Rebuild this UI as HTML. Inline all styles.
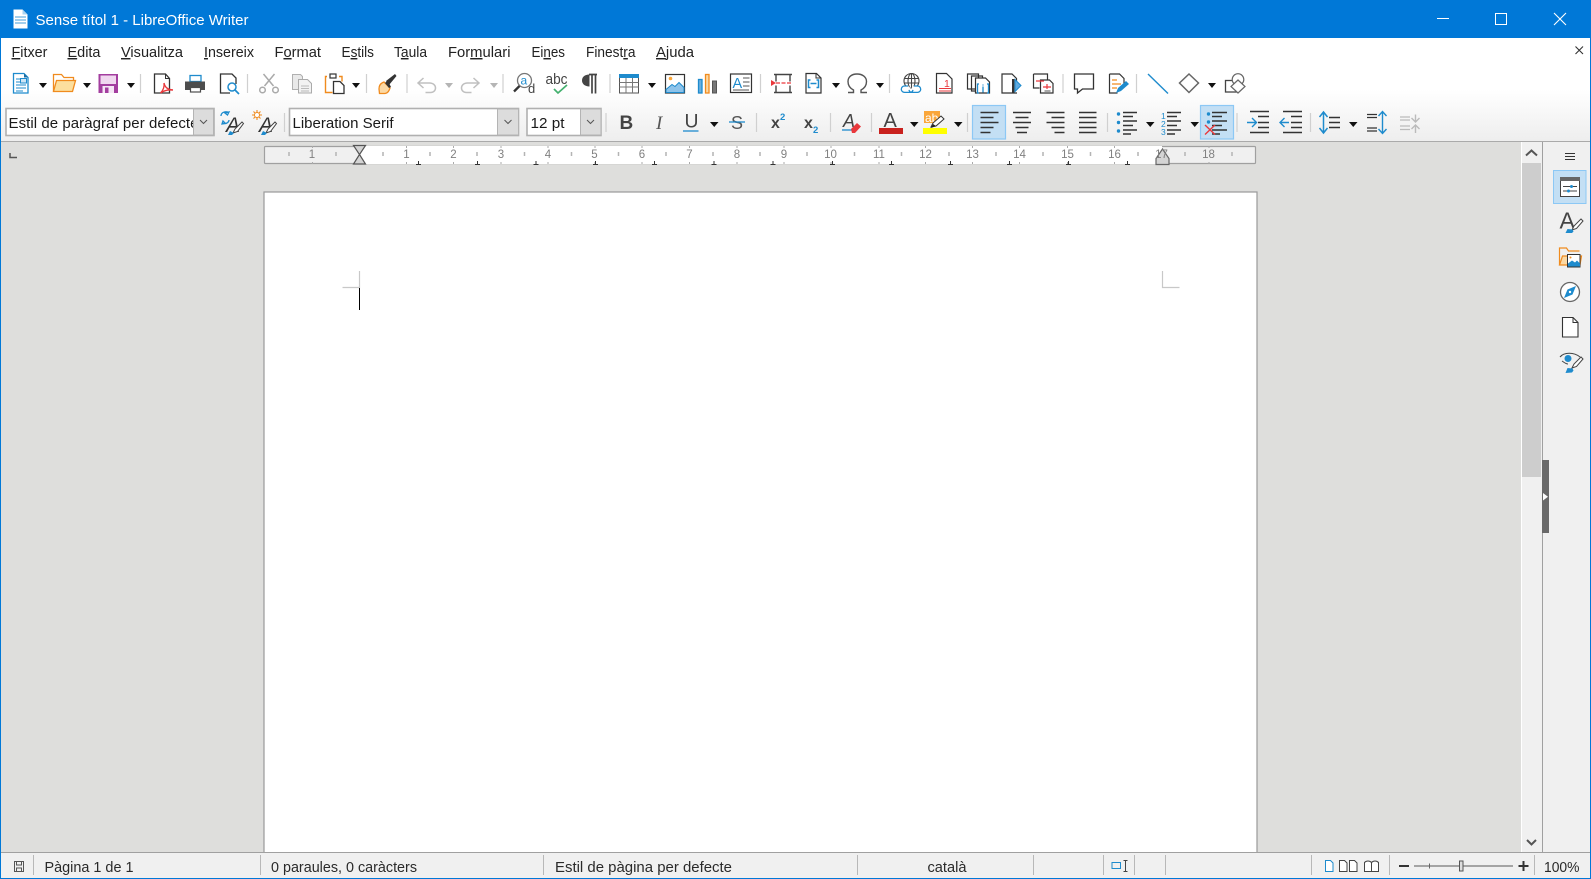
<!DOCTYPE html>
<html><head><meta charset="utf-8"><title>Sense títol 1 - LibreOffice Writer</title>
<style>
html,body{margin:0;padding:0;background:#fff;width:1591px;height:879px;overflow:hidden}
svg{display:block;position:absolute;left:0;top:0}
text{font-family:"Liberation Sans",sans-serif;fill:#222}
.m{font-size:14.5px;fill:#222}
.s{font-size:14.5px;fill:#2a2a2a}
.c{font-size:15px;fill:#1a1a1a}
.r{font-size:11.5px;fill:#808080;text-anchor:middle}
.u{text-decoration:underline}
.a{fill:#111}
.sep{stroke:#d0d0d0;stroke-width:1.2}
.sb{stroke:#b8b8b8;stroke-width:1}
.l{stroke:#333;stroke-width:1.6}
</style></head><body>
<svg width="1591" height="879" viewBox="0 0 1591 879" xmlns="http://www.w3.org/2000/svg">
<defs>
<linearGradient id="tb" x1="0" y1="0" x2="0" y2="1"><stop offset="0" stop-color="#fff"/><stop offset=".5" stop-color="#fff"/><stop offset="1" stop-color="#eeeeee"/></linearGradient>
<clipPath id="cl"><rect x="6" y="108" width="187" height="28"/></clipPath>
</defs>
<rect width="1591" height="879" fill="#0078d7"/>
<rect x="1" y="38" width="1589" height="103" fill="url(#tb)"/>
<rect x="1" y="141" width="1589" height="1.500" fill="#aaa"/>
<rect x="1" y="142" width="1520" height="710" fill="#dededc"/>
<!-- title -->
<path d="M13.500 9.500h9l5 5v14h-14z" fill="#fff"/><path d="M22.500 9.500l5 5h-5z" fill="#a9d3f0"/><path d="M15 17h11M15 20h11M15 23h11" stroke="#6ab0e0" stroke-width="1.200"/>
<text x="35.500" y="25" textLength="213" lengthAdjust="spacingAndGlyphs" style="font-size:15px;fill:#fff">Sense títol 1 - LibreOffice Writer</text>
<path d="M1437 18.500h12" stroke="#fff" stroke-width="1"/>
<rect x="1495.500" y="13.500" width="11" height="11" fill="none" stroke="#fff"/>
<path d="M1554 13l12 12M1566 13l-12 12" stroke="#fff" stroke-width="1.100"/>
<!-- menu -->
<text class="m" x="11.500" y="57" textLength="36" lengthAdjust="spacingAndGlyphs"><tspan class="u">F</tspan>itxer</text>
<text class="m" x="67.500" y="57" textLength="33" lengthAdjust="spacingAndGlyphs"><tspan class="u">E</tspan>dita</text>
<text class="m" x="121" y="57" textLength="62" lengthAdjust="spacingAndGlyphs"><tspan class="u">V</tspan>isualitza</text>
<text class="m" x="204" y="57" textLength="50" lengthAdjust="spacingAndGlyphs"><tspan class="u">I</tspan>nsereix</text>
<text class="m" x="274.500" y="57" textLength="46.500" lengthAdjust="spacingAndGlyphs">F<tspan class="u">o</tspan>rmat</text>
<text class="m" x="341.500" y="57" textLength="32.500" lengthAdjust="spacingAndGlyphs">E<tspan class="u">s</tspan>tils</text>
<text class="m" x="394" y="57" textLength="33" lengthAdjust="spacingAndGlyphs">T<tspan class="u">a</tspan>ula</text>
<text class="m" x="448" y="57" textLength="62.500" lengthAdjust="spacingAndGlyphs">For<tspan class="u">m</tspan>ulari</text>
<text class="m" x="531.500" y="57" textLength="33.500" lengthAdjust="spacingAndGlyphs">Ei<tspan class="u">n</tspan>es</text>
<text class="m" x="586" y="57" textLength="49.500" lengthAdjust="spacingAndGlyphs">Finest<tspan class="u">r</tspan>a</text>
<text class="m" x="656" y="57" textLength="38" lengthAdjust="spacingAndGlyphs"><tspan class="u">A</tspan>juda</text>
<path d="M1575.500 46.500l7.500 7.500M1583 46.500l-7.500 7.500" stroke="#333" stroke-width="1.100"/>

<!-- toolbar 1 separators -->
<path class="sep" d="M140.500 74v19M247.500 74v19M366.500 74v19M407 74v19M503 74v19M610 74v19M760.500 74v19M889.500 74v19M1063 74v19M1136.500 74v19"/>
<!-- toolbar 2 separators -->
<path class="sep" d="M284.500 113v19M606 113v19M756.500 113v19M830.500 113v19M871.500 113v19M967.500 113v19M1107.500 113v19M1237 113v19M1310.500 113v19"/>
<!-- dropdown arrows -->
<g class="a">
<path d="M39 83h8l-4 5z M83 83h8l-4 5z M127 83h8l-4 5z M352 83h8l-4 5z M648 83h8l-4 5z M832 83h8l-4 5z M876 83h8l-4 5z M1208 83h8l-4 5z"/>
<path d="M710 122h8.500l-4.250 5z M910 122h8.500l-4.250 5z M954 122h8.500l-4.250 5z M1146 122h8.500l-4.250 5z M1190.500 122h8.500l-4.250 5z M1349 122h8.500l-4.250 5z"/>
</g>
<path d="M445 83h8l-4 5z M490 83h8l-4 5z" fill="#b5b5b5"/>

<!-- New -->
<path d="M13.500 73.500h10.500l4 4v15.500h-14.500z" fill="#fff" stroke="#1e8bcd" stroke-width="1.300"/>
<path d="M24 73.500l4 4h-4z" fill="#1c6ea4"/>
<path d="M16 79h4M16 82h4M16 85h10M16 88h10M16 91h7" stroke="#1e8bcd" stroke-width="1"/>
<rect x="20.500" y="78.500" width="6" height="4.500" fill="#cfe6f5" stroke="#1e8bcd" stroke-width="1"/>
<!-- Open -->
<path d="M53.500 91.500v-17h8l2.500 3h9.500v4" fill="none" stroke="#f08b1e" stroke-width="1.300"/>
<path d="M53.500 91.500l3-11h19l-3 11z" fill="#fcdf9e" stroke="#f08b1e" stroke-width="1.300"/>
<!-- Save -->
<rect x="98.500" y="74" width="19.500" height="19" fill="#a33e9f"/>
<rect x="100.500" y="75.500" width="15.500" height="8.500" fill="#f0d7ef"/>
<rect x="102.500" y="86" width="11.500" height="7" fill="#f5e6f5"/>
<rect x="105" y="87.500" width="3.500" height="5.500" fill="#a33e9f"/>
<!-- PDF -->
<path d="M154.500 74h11l4 4.500v14.500h-15z" fill="#fff" stroke="#333" stroke-width="1.300"/><path d="M165.500 74v4.500h4" fill="none" stroke="#333"/>
<path d="M160.500 93c3-3 4-7 3.500-10 1 4 3 6.500 9 7-5-.5-9 .5-12.500 3z" fill="#fff" stroke="#e9383c" stroke-width="1.400"/>
<!-- Print -->
<rect x="190" y="75.500" width="11" height="6" fill="#fff" stroke="#1e8bcd" stroke-width="1.300"/>
<path d="M185 81.500h20v8.500h-4v-3h-11v3h-5z" fill="#4d4d4d"/>
<rect x="190.500" y="87.500" width="10" height="4.500" fill="#fff" stroke="#4d4d4d" stroke-width="1.200"/>
<!-- Preview -->
<path d="M230 93h-9.500v-19h11.500l4 4v6" fill="#fff" stroke="#333" stroke-width="1.300"/>
<circle cx="232" cy="87" r="4" fill="#fff" stroke="#1e8bcd" stroke-width="1.500"/><path d="M235 90l4 4" stroke="#1e8bcd" stroke-width="1.700"/>
<!-- Cut -->
<g fill="none" stroke="#aaa" stroke-width="1.500"><path d="M263.500 74l10 12M274.500 74l-10 12"/><circle cx="262.500" cy="90" r="2.800"/><circle cx="275.500" cy="90" r="2.800"/></g>
<!-- Copy -->
<path d="M292.500 74.500h8l2 2v13h-10z" fill="#e9e9e9" stroke="#b0b0b0"/><path d="M298.500 79.500h9l4 4v9.500h-13z" fill="#f2f2f2" stroke="#aaa"/><path d="M301 86h8M301 88.500h8M301 91h8" stroke="#bbb"/>
<!-- Paste -->
<path d="M327 76.500h-1.500v16h7" fill="none" stroke="#f08b1e" stroke-width="1.400"/><path d="M339 76.500h3v5" fill="none" stroke="#f08b1e" stroke-width="1.400"/>
<rect x="330" y="74" width="6" height="4" fill="#fff" stroke="#333" stroke-width="1.200"/>
<path d="M333.500 81.500h6.500l4 4v8h-10.500z" fill="#fff" stroke="#333" stroke-width="1.300"/>
<!-- Clone -->
<path d="M379 89c0-4 2-6 5-7l6 6c-1 3-2 5-5 5.500h-5.500z" fill="#fcd9a4" stroke="#f08b1e" stroke-width="1.300"/>
<path d="M385 83l2-2 2 2 2 4 -2 1z" fill="#333"/><path d="M386 81l9-7 1.500 2-7.500 9z" fill="#333"/>
<!-- Undo/Redo -->
<g fill="none" stroke="#c0c0c0" stroke-width="1.500"><path d="M423.500 78l-5.500 5 5.500 5M418.500 83h11c4 0 6 2.500 6 5s-2 4.500-5 4.500h-5"/><path d="M473.500 78l5.500 5-5.500 5M478.500 83h-11c-4 0-6 2.500-6 5s2 4.500 5 4.500h5"/></g>
<!-- Find -->
<circle cx="524.500" cy="80.500" r="7" fill="#fff" stroke="#777" stroke-width="1.300"/><path d="M519.500 86l-5.500 5.500" stroke="#333" stroke-width="2.300"/>
<text x="520.500" y="84.500" style="font-size:12px;fill:#1e8bcd">a</text><text x="528" y="93" style="font-size:13px;fill:#444">d</text>
<!-- Spell -->
<text x="545.500" y="84" textLength="22" lengthAdjust="spacingAndGlyphs" style="font-size:14.500px;fill:#444">abc</text>
<path d="M554 89l4 4 9-8" fill="none" stroke="#43b06e" stroke-width="1.700"/>
<!-- Pilcrow -->
<path d="M589 74.500h8M592 74.500v19M595.500 74.500v19" stroke="#444" stroke-width="1.700" fill="none"/><path d="M589.500 74.500c-5 0-7.500 2.500-7.500 6s3 6 7.500 6z" fill="#444"/>
<!-- Table -->
<rect x="619.500" y="74.500" width="19" height="18.500" fill="#fff" stroke="#555"/><rect x="619" y="74" width="20" height="4" fill="#1e8bcd"/>
<path d="M619.500 82.500h19M619.500 87h19M626 78v15M632.500 78v15" stroke="#777" stroke-width="1"/>
<!-- Image -->
<rect x="665.500" y="74.500" width="19" height="18.500" fill="#fff" stroke="#333" stroke-width="1.200"/>
<circle cx="670.500" cy="78.500" r="1.800" fill="#faa63a"/><path d="M666 92.500v-3l6-5 3 2 4-4 5 5v5z" fill="#8dc3ea" stroke="#1e8bcd"/>
<!-- Chart -->
<rect x="698.500" y="79.500" width="3.500" height="13.500" fill="#69b0e0" stroke="#1e8bcd" stroke-width="1.300"/><rect x="705.500" y="74.500" width="3.500" height="18.500" fill="#fcd9a4" stroke="#f08b1e" stroke-width="1.300"/><rect x="712.500" y="81" width="4" height="12" fill="#777" stroke="#555"/>
<!-- Textbox -->
<rect x="730.500" y="74" width="21" height="18.500" fill="#fff" stroke="#333" stroke-width="1.200"/>
<text x="732.500" y="88" style="font-size:14.500px;fill:#1e8bcd">A</text><path d="M743 78h6.500M743 82h6.500M743 86h6.500M733 90h16" stroke="#555" stroke-width="1"/>
<!-- Break -->
<path d="M774 74.500h18M774 92.500h18M776 74.500v7M790 74.500v7M776 85.500v7M790 85.500v7" stroke="#444" stroke-width="1.400" fill="none"/>
<path d="M771 80v6l5-3z" fill="#e9383c"/><path d="M776 83h16" stroke="#e9383c" stroke-width="1.300" stroke-dasharray="4 1.500"/>
<!-- Field -->
<path d="M806 73.500h10.500l4.500 4.500v15h-15z" fill="#fff" stroke="#333" stroke-width="1.200"/><path d="M816 73.500v4.500h5" fill="none" stroke="#333"/>
<path d="M810.500 80h-2v7.500h2M816.500 80h2v7.500h-2M810.500 83.500h6" fill="none" stroke="#1e8bcd" stroke-width="1.500"/>
<!-- Omega -->
<path d="M848 92.500h5.500v-2.500c-3-1.500-5.500-4.500-5.500-8.500 0-4.500 3.500-7.500 9-7.500s9.500 3 9.500 7.500c0 4-2.500 7-5.500 8.500v2.500h6" fill="none" stroke="#555" stroke-width="1.400"/>
<!-- Hyperlink -->
<g fill="none" stroke="#444" stroke-width="1.100"><circle cx="911.500" cy="81" r="7.500"/><ellipse cx="911.500" cy="81" rx="3.500" ry="7.500"/><path d="M904 78.500h15M904 83h15M911.500 73.500v15"/></g>
<path d="M908 86.500h-3.500a3.200 3.200 0 0 0 0 6.400h5.500a3.200 3.200 0 0 0 3-2.500M914 86.500h3.500a3.200 3.200 0 0 1 0 6.400h-5.500a3.200 3.200 0 0 1-3-2.500" transform="translate(0,-.5)" fill="#fff" stroke="#1e8bcd" stroke-width="1.300"/>
<!-- Footnote -->
<path d="M936.500 73.500h10l5.500 5.500v14h-15.500z" fill="#fff" stroke="#333" stroke-width="1.200"/>
<text x="944" y="87" style="font-size:10.500px;fill:#e9383c">1</text><path d="M939 88.500h12M939 91h12" stroke="#e9383c" stroke-width="1.100"/>
<!-- Bookmark pages -->
<path d="M967.500 74h11v15h-11z M971.500 76h11v15h-11z" fill="#fff" stroke="#333" stroke-width="1.200"/>
<path d="M975.500 78h10l4 4v11h-14z" fill="#fff" stroke="#333" stroke-width="1.200"/>
<path d="M979 84h-1.500v9h1.500M987 84h1.500v9h-1.500M983 86.500v6M983 84.500v1" fill="none" stroke="#1e8bcd" stroke-width="1.300"/>
<!-- Cross-ref -->
<path d="M1017 93h-15v-19h10l4.500 4.500v6" fill="#fff" stroke="#333" stroke-width="1.200"/>
<rect x="1012" y="79" width="2.400" height="14" fill="#333"/><path d="M1015 79.500l6 6-6 6z" fill="#5ea9df" stroke="#1e8bcd"/>
<!-- 1033 -->
<path d="M1033.500 74h14v6M1033.500 74v14h6" fill="none" stroke="#333" stroke-width="1.200"/><path d="M1040.500 80h9l3.500 3.500v9.500h-12.500z" fill="#fff" stroke="#333" stroke-width="1.200"/>
<path d="M1036 81h8M1043 87h8M1047 84v5" stroke="#e9383c" stroke-width="1.200"/><path d="M1044.500 91h6" stroke="#555"/>
<!-- Comment -->
<path d="M1074.500 74h19v15h-11l-5 4v-4h-3z" fill="#fff" stroke="#333" stroke-width="1.300"/>
<!-- Track -->
<path d="M1109.500 74h10l4.500 4.500v5M1109.500 74v19h8" fill="#fff" stroke="#333" stroke-width="1.200"/>
<path d="M1112 80h5M1112 84h9M1112 88h5" stroke="#f08b1e" stroke-width="1.200"/>
<path d="M1116 93l2-5 8-7 3 3-8 7z" fill="#1e8bcd"/>
<!-- Line -->
<path d="M1148 74l20 19.500" stroke="#1e8bcd" stroke-width="1.400"/>
<!-- Diamond -->
<path d="M1189 74l9.500 9-9.500 9.500-9.500-9.500z" fill="#fff" stroke="#666" stroke-width="1.500"/>
<!-- Shapes -->
<rect x="1225.500" y="80.500" width="13" height="11.500" fill="#fff" stroke="#444" stroke-width="1.300"/><circle cx="1238" cy="79.500" r="5.800" fill="#fff" stroke="#666" stroke-width="1.200"/><path d="M1238 80l7 6.500-7 6.500-7-6.500z" fill="#fff" stroke="#666" stroke-width="1.200"/>

<!-- toolbar 2 combos -->
<rect x="6" y="108.500" width="208" height="27" fill="#fff" stroke="#b0b0b0" stroke-width="1.600"/>
<rect x="193.500" y="109" width="20" height="26" fill="#dcdcdc" stroke="#b4b4b4"/>
<path d="M200 120l3.500 3.500 3.500-3.500" fill="none" stroke="#555"/>
<text class="c" x="8.500" y="128" clip-path="url(#cl)" textLength="190" lengthAdjust="spacing">Estil de paràgraf per defecte</text>
<rect x="289.500" y="108.500" width="229" height="27" fill="#fff" stroke="#b0b0b0" stroke-width="1.600"/>
<rect x="497.500" y="109" width="21" height="26" fill="#dcdcdc" stroke="#b4b4b4"/>
<path d="M504.500 120l3.500 3.500 3.500-3.500" fill="none" stroke="#555"/>
<text class="c" x="292.500" y="128" textLength="101" lengthAdjust="spacingAndGlyphs">Liberation Serif</text>
<rect x="527" y="108.500" width="74" height="27" fill="#fff" stroke="#b0b0b0" stroke-width="1.600"/>
<rect x="580.500" y="109" width="20.500" height="26" fill="#dcdcdc" stroke="#b4b4b4"/>
<path d="M587 120l3.500 3.500 3.500-3.500" fill="none" stroke="#555"/>
<text class="c" x="530.500" y="128" textLength="34" lengthAdjust="spacingAndGlyphs">12 pt</text>
<!-- style icons -->
<text x="226" y="132" style="font-size:21px;font-style:italic;fill:#333">A</text>
<path d="M221 116c0-3 3-5 7-4M229 112l-1.500 3-2.500-2zM229 120c0 2-2 4-6 3.500M222 124l1-3 2.500 2.500z" fill="none" stroke="#1e8bcd" stroke-width="1.300"/>
<path d="M233 133l2-4 7-7 1.500 1.500-6 8z" fill="#fff" stroke="#444"/><path d="M228 135l2-4 4 2-2 2z" fill="#1e8bcd"/>
<text x="259" y="132" style="font-size:21px;font-style:italic;fill:#333">A</text>
<path d="M257 110v10M252 115h10M253.500 111.500l7 7M260.500 111.500l-7 7" stroke="#f08b1e" stroke-width="1.100"/><circle cx="257" cy="115" r="2.500" fill="#fff" stroke="#f08b1e"/>
<path d="M266 133l2-4 7-7 1.500 1.500-6 8z" fill="#fff" stroke="#444"/><path d="M261 135l2-4 4 2-2 2z" fill="#1e8bcd"/>
<!-- BIUS -->
<text x="619.500" y="129" style="font-size:19px;font-weight:bold;fill:#444">B</text>
<text x="656" y="129" style="font-size:19px;font-family:'Liberation Serif',serif;font-style:italic;fill:#555">I</text>
<text x="684.500" y="127.500" textLength="14" lengthAdjust="spacingAndGlyphs" style="font-size:19px;fill:#444">U</text><path d="M683 131h15.500" stroke="#1e8bcd" stroke-width="1.300"/>
<text x="731" y="129" style="font-size:18px;fill:#555">S</text><path d="M729 122h16" stroke="#1e8bcd" stroke-width="1.300"/>
<text x="771" y="128" style="font-size:16px;font-weight:bold;fill:#444">x</text><text x="780" y="120" style="font-size:9.500px;font-weight:bold;fill:#1e8bcd">2</text>
<text x="804" y="128" style="font-size:16px;font-weight:bold;fill:#444">x</text><text x="813" y="133" style="font-size:9.500px;font-weight:bold;fill:#1e8bcd">2</text>
<text x="843" y="127" style="font-size:18px;fill:#444;font-style:italic">A</text><path d="M842 130h10" stroke="#1e8bcd" stroke-width="1.300"/><path d="M851 129l6-6 4 3.500-6 6.500h-3z" fill="#e9383c"/>
<text x="883.500" y="127" style="font-size:20px;fill:#444">A</text><rect x="879" y="128" width="24" height="6" fill="#c9211e"/>
<rect x="924" y="111" width="16" height="12" fill="#faa63a"/><text x="925" y="122" style="font-size:12px;fill:#fff">ab</text>
<path d="M931 127l2-4 8-7 3 3-8 7z" fill="#fff" stroke="#333"/><path d="M931 128l2-4 3 2z" fill="#222"/><rect x="923" y="128" width="24" height="6" fill="#ff0"/>
<!-- alignment -->
<rect x="972.500" y="105.500" width="33" height="33.500" fill="#c3dff4" stroke="#8cc8f5" stroke-width="1.200"/>
<path class="l" d="M980.500 112.500h18M980.500 117.500h13M980.500 122.500h18M980.500 127.500h13M980.500 132.500h10"/>
<path class="l" d="M1013 112.500h18M1015.500 117.500h13M1013 122.500h18M1015.500 127.500h13M1017 132.500h10"/>
<path class="l" d="M1046.500 112.500h18M1051.500 117.500h13M1046.500 122.500h18M1051.500 127.500h13M1054.500 132.500h10"/>
<path class="l" d="M1079 112.500h17.500M1079 117.500h17.500M1079 122.500h17.500M1079 127.500h17.500M1079 132.500h17.500"/>
<!-- bullets -->
<circle cx="1118.500" cy="114" r="1.700" fill="#1e8bcd"/><circle cx="1118.500" cy="122.500" r="1.700" fill="#1e8bcd"/><circle cx="1118.500" cy="131" r="1.700" fill="#1e8bcd"/>
<path class="l" style="stroke-width:1.400" d="M1123 112.500h14M1123 116.500h10M1123 121h14M1123 125.500h10M1123 130h14M1123 134h8"/>
<text x="1161" y="119" style="font-size:8.500px;fill:#1e8bcd">1</text><text x="1161" y="127" style="font-size:8.500px;fill:#1e8bcd">2</text><text x="1161" y="135" style="font-size:8.500px;fill:#1e8bcd">3</text>
<path class="l" style="stroke-width:1.400" d="M1167 112.500h14M1167 116.500h10M1167 121h14M1167 125.500h10M1167 130h14M1167 134h8"/>
<rect x="1200.500" y="105.500" width="33" height="33.500" fill="#c3dff4" stroke="#8cc8f5" stroke-width="1.200"/>
<circle cx="1208.500" cy="114" r="1.700" fill="#1e8bcd"/><circle cx="1208.500" cy="122" r="1.700" fill="#1e8bcd"/>
<path class="l" style="stroke-width:1.400" d="M1212 112.500h15M1212 116.500h10M1212 121h15M1212 125.500h10M1212 130h15M1212 134h8"/>
<path d="M1205 125l10 9.500M1215 125l-10 9.500" stroke="#e9383c" stroke-width="1.400"/>
<!-- indents -->
<path class="l" style="stroke-width:1.400" d="M1250 111.500h19M1258 116.500h11M1258 122.500h11M1258 127.500h11M1250 132.500h19"/>
<path d="M1247 122.500h9M1252 118l4.500 4.500-4.500 4.500" fill="none" stroke="#1e8bcd" stroke-width="1.400"/>
<path class="l" style="stroke-width:1.400" d="M1283 111.500h19M1291 116.500h11M1291 122.500h11M1291 127.500h11M1283 132.500h19"/>
<path d="M1289 122.500h-9M1284.500 118l-4.500 4.500 4.500 4.500" fill="none" stroke="#1e8bcd" stroke-width="1.400"/>
<!-- spacing -->
<path d="M1323.500 113v19M1319.500 117l4-5 4 5M1319.500 128l4 5 4-5" fill="none" stroke="#1e8bcd" stroke-width="1.500"/>
<path class="l" style="stroke-width:1.400" d="M1329 117.500h11M1329 122.500h11M1329 127.500h11"/>
<path class="l" style="stroke-width:1.300" d="M1367 114.500h10M1367 117.500h10M1367 128h10M1367 131h10"/>
<path d="M1382.500 112v11M1378.500 116l4-4.500 4 4.500M1382.500 122v11M1378.500 129l4 4.500 4-4.500" fill="none" stroke="#1e8bcd" stroke-width="1.400"/>
<path d="M1400 117h10M1400 120h10M1400 126h10M1400 129.500h10" stroke="#bbb" stroke-width="1.300"/>
<path d="M1415.500 114.500v7.500M1411.500 118l4 4 4-4M1415.500 133v-7.500M1411.500 129l4-4 4 4" fill="none" stroke="#bbb" stroke-width="1.400"/>

<!-- ruler -->
<path d="M10 153v4.500h7" fill="none" stroke="#555" stroke-width="1.500"/>
<rect x="264.500" y="146.500" width="991" height="17" rx="1" fill="#f0f0f0" stroke="#a0a0a0" stroke-width="1.200"/>
<rect x="360" y="146" width="802" height="18" fill="#fff"/>
<path stroke="#b4b4b4" stroke-width="1.500" d="M289 152v4M336 152v4M383 152v4M430 152v4M477 152v4M524.500 152v4M571.500 152v4M618.500 152v4M666 152v4M713 152v4M760 152v4M807 152v4M854.500 152v4M901.500 152v4M949 152v4M996 152v4M1043 152v4M1090.500 152v4M1138 152v4M1185 152v4M1232 152v4"/>
<path stroke="#aaa" stroke-width="1" d="M312.500 146v2M312.500 162v2M406.500 146v2M406.500 162v2M453.500 146v2M453.500 162v2M501 146v2M501 162v2M548 146v2M548 162v2M595 146v2M595 162v2M642 146v2M642 162v2M689.500 146v2M689.500 162v2M737 146v2M737 162v2M784 146v2M784 162v2M831 146v2M831 162v2M879 146v2M879 162v2M925.500 146v2M925.500 162v2M972.500 146v2M972.500 162v2M1019.500 146v2M1019.500 162v2M1067.500 146v2M1067.500 162v2M1114.500 146v2M1114.500 162v2M1209 146v2M1209 162v2"/>
<path stroke="#333" stroke-width="1" fill="none" d="M418.500 161v3M416 164.500h5M477.500 161v3M475 164.500h5M536 161v3M533.500 164.500h5M595.500 161v3M593 164.500h5M654.500 161v3M652 164.500h5M714 161v3M711.500 164.500h5M773 161v3M770.500 164.500h5M832.500 161v3M830 164.500h5M891.500 161v3M889 164.500h5M950.500 161v3M948 164.500h5M1009.500 161v3M1007 164.500h5M1068.500 161v3M1066 164.500h5M1127.500 161v3M1125 164.500h5"/>
<path d="M353.500 145.500h12l-6 9 6 9.500h-12l6-9.500z" fill="#d4d4d4" stroke="#555" stroke-width="1.200"/>
<path d="M1162.500 149l6.500 9.500v6h-13v-6z" fill="#d4d4d4" stroke="#666" stroke-width="1.200"/>
<text class="r" x="312" y="158">1</text><text class="r" x="406.500" y="158">1</text><text class="r" x="453.500" y="158">2</text><text class="r" x="501" y="158">3</text><text class="r" x="548" y="158">4</text><text class="r" x="594.500" y="158">5</text><text class="r" x="642" y="158">6</text><text class="r" x="689.500" y="158">7</text><text class="r" x="737" y="158">8</text><text class="r" x="784" y="158">9</text><text class="r" x="830.500" y="158">10</text><text class="r" x="879" y="158">11</text><text class="r" x="925.500" y="158">12</text><text class="r" x="972.500" y="158">13</text><text class="r" x="1019.500" y="158">14</text><text class="r" x="1067.500" y="158">15</text><text class="r" x="1114.500" y="158">16</text><text class="r" x="1161.500" y="158">17</text><text class="r" x="1208.500" y="158">18</text>

<!-- page -->
<rect x="264" y="192" width="993" height="680" fill="#fff" stroke="#9a9a9a" stroke-width="1.200"/>
<path d="M359.500 271v16.500H342.500M1162.500 271v16.500h17" fill="none" stroke="#c8c8c8" stroke-width="1.200"/>
<rect x="359" y="288" width="1" height="22" fill="#000"/>

<!-- scrollbar -->
<rect x="1521" y="142" width="1" height="710" fill="#fff"/>
<rect x="1522" y="142" width="20" height="710" fill="#f0f0f0"/>
<rect x="1522" y="163" width="19" height="314" fill="#cdcdcd"/>
<path d="M1526 155.500l5.500-5 5.500 5" fill="none" stroke="#555" stroke-width="2"/>
<path d="M1527 840l4.500 4.500 4.500-4.500" fill="none" stroke="#555" stroke-width="2"/>
<!-- sidebar -->
<rect x="1543" y="142" width="47" height="710" fill="#f0f0f0"/>
<rect x="1542" y="142" width="1" height="710" fill="#a0a0a0"/>
<rect x="1542" y="460" width="7" height="73" fill="#696969"/>
<path d="M1543 493v7.500l5-3.800z" fill="#fff"/>
<path d="M1565 153.500h10M1565 156.500h10M1565 159.500h10" stroke="#333" stroke-width="1.100"/>
<rect x="1553.500" y="170.500" width="32.500" height="33" fill="#c3dff4" stroke="#8cc8f5"/>
<rect x="1560.500" y="177.500" width="19" height="19" fill="#fff" stroke="#444"/><rect x="1560" y="177" width="20" height="4" fill="#666"/>
<path d="M1563 186.500h14M1563 191h14" stroke="#444"/><circle cx="1571.500" cy="186.500" r="1.500" fill="#1e8bcd"/><circle cx="1568.500" cy="191" r="1.500" fill="#1e8bcd"/>
<text x="1559.500" y="228.500" style="font-size:23px;fill:#444">A</text>
<path d="M1572 230l2-4 7-7 2 2-6.500 7.500z" fill="#fff" stroke="#444"/><path d="M1565.500 233l2-4 5 .5 1 2-1.500 1.500z" fill="#1e8bcd"/>
<path d="M1559.500 265v-17h7l2 3h11" fill="none" stroke="#f08b1e" stroke-width="1.200"/><path d="M1559.500 265l3-9h19l-1.500 9z" fill="#fcd9a4" stroke="#f08b1e" stroke-width="1.200"/>
<rect x="1567.500" y="254.500" width="12.500" height="12.500" fill="#fff" stroke="#333"/><path d="M1568 266.500v-3l4-3 3 2 2-2 3 3v3z" fill="#1e8bcd"/><circle cx="1570.500" cy="257.500" r="1" fill="#f08b1e"/>
<circle cx="1570" cy="292" r="9.500" fill="#fff" stroke="#666" stroke-width="1.300"/><path d="M1576 286l-3.500 8.500-8.500 3.500 3.500-8.500z" fill="#1e8bcd"/><circle cx="1570" cy="292" r="1.200" fill="#fff"/>
<path d="M1562.500 317.500h10.500l5 5v14.500h-15.500z" fill="#fff" stroke="#333" stroke-width="1.100"/><path d="M1573 317.500v5h5" fill="none" stroke="#333"/>
<path d="M1560 357c4-5 14-5 20 0" fill="none" stroke="#444" stroke-width="1.100"/><circle cx="1568" cy="358.500" r="3.500" fill="#1e8bcd"/><path d="M1562 361c3 2 4 3 6 3" fill="none" stroke="#444"/>
<path d="M1572 368l2-4 7-7 2 2-6.500 7.500z" fill="#fff" stroke="#444"/><path d="M1565.500 373l2-5 5 .5 1 2-1.500 2z" fill="#1e8bcd"/>

<!-- status -->
<rect x="1" y="852" width="1589" height="26" fill="#f0f0f0"/>
<rect x="1" y="852" width="1589" height="1" fill="#a0a0a0"/>
<path class="sb" d="M33.500 855v20M260.500 855v20M543.500 855v20M857.500 855v20M1033.500 855v20M1103.500 855v20M1134.500 855v20M1165.500 855v20M1311.500 855v20M1389.500 855v20M1534.500 855v20"/>
<path d="M14.500 861.500h9v10h-9z M16.500 861.500v3.500h5v-3.500M16.500 871.500v-3.500h5v3.500" fill="none" stroke="#555"/>
<text class="s" x="44.500" y="872" textLength="89" lengthAdjust="spacingAndGlyphs">Pàgina 1 de 1</text>
<text class="s" x="271" y="872" textLength="146" lengthAdjust="spacingAndGlyphs">0 paraules, 0 caràcters</text>
<text class="s" x="555" y="872" textLength="177" lengthAdjust="spacingAndGlyphs">Estil de pàgina per defecte</text>
<text class="s" x="927.500" y="872" textLength="39" lengthAdjust="spacingAndGlyphs">català</text>
<rect x="1112" y="862.500" width="8.500" height="6" fill="none" stroke="#1e8bcd"/><path d="M1125.500 860.500v11M1123.500 860.500h4M1123.500 871.500h4" stroke="#444" fill="none"/>
<path d="M1325.500 860.500h5l2.500 2.500v8.500h-7.500z" fill="#fff" stroke="#1e8bcd"/>
<path d="M1339.500 860.500h5l2.500 2.500v8.500h-7.500z M1349.500 860.500h5l2.500 2.500v8.500h-7.500z" fill="#fff" stroke="#444"/>
<path d="M1364.500 862.500c2-2 5-2 7 0 2-2 5-2 7 0v9h-14z M1371.500 862.500v9" fill="#fff" stroke="#444"/>
<path d="M1399 866h10" stroke="#333" stroke-width="2"/>
<path d="M1414 866h99" stroke="#777" stroke-width="1.200"/><path d="M1429.500 863.500v5" stroke="#666"/>
<rect x="1459.500" y="861" width="3.500" height="10" fill="#ddd" stroke="#555"/>
<path d="M1518.500 866h10M1523.500 861v10" stroke="#333" stroke-width="2"/>
<text class="s" x="1544" y="872" textLength="35.500" lengthAdjust="spacingAndGlyphs">100%</text>
</svg>
</body></html>
